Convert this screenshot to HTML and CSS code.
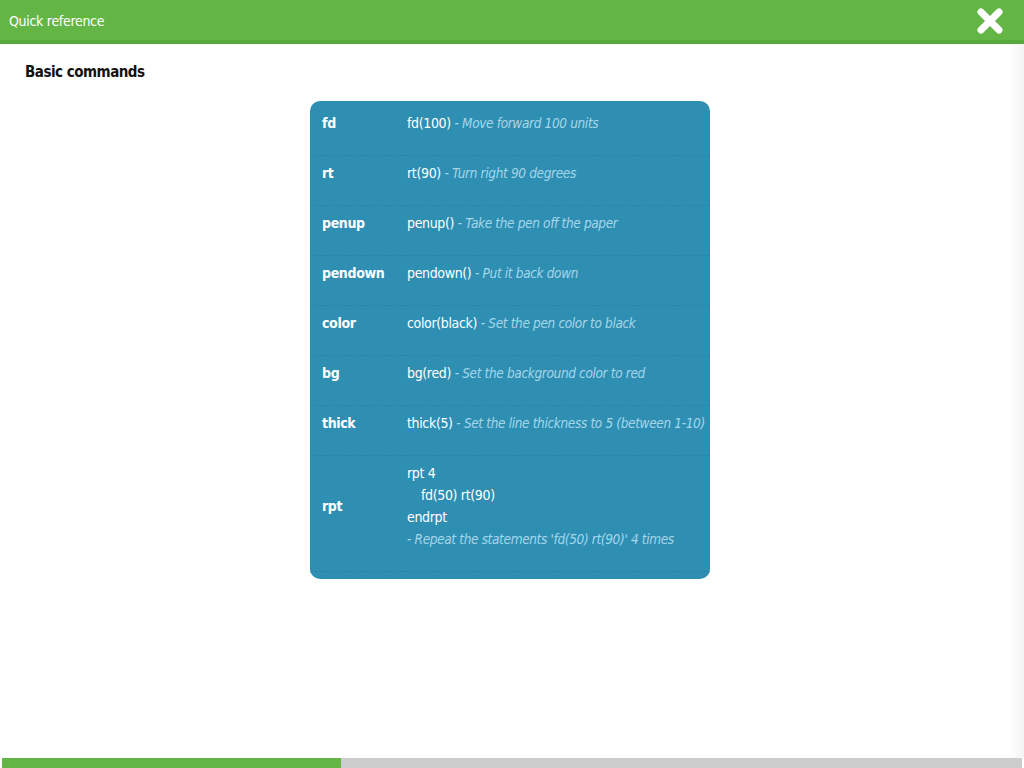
FILE: index.html
```html
<!DOCTYPE html>
<html>
<head>
<meta charset="utf-8">
<link rel="stylesheet" href="styles.css">
</head>
<body>
<div class="page">
  <header class="topbar">
    <span class="title">Quick reference</span>
    <svg class="close" width="28" height="28" viewBox="0 0 28 28"><path d="M5 5 L23 23 M23 5 L5 23" stroke="#fff" stroke-width="7" stroke-linecap="round" fill="none"/></svg>
  </header>
  <main class="content">
    <h1 class="heading">Basic commands</h1>
    <div class="card">
      <table class="ref">
        <colgroup><col class="col-cmd"><col></colgroup>
        <tr><td class="cmd">fd</td><td class="ex">fd(100) <span class="desc">- Move forward 100 units</span></td></tr>
        <tr><td class="cmd">rt</td><td class="ex">rt(90) <span class="desc">- Turn right 90 degrees</span></td></tr>
        <tr><td class="cmd">penup</td><td class="ex">penup() <span class="desc">- Take the pen off the paper</span></td></tr>
        <tr><td class="cmd">pendown</td><td class="ex">pendown() <span class="desc">- Put it back down</span></td></tr>
        <tr><td class="cmd">color</td><td class="ex">color(black) <span class="desc">- Set the pen color to black</span></td></tr>
        <tr><td class="cmd">bg</td><td class="ex">bg(red) <span class="desc">- Set the background color to red</span></td></tr>
        <tr><td class="cmd">thick</td><td class="ex">thick(5) <span class="desc">- Set the line thickness to 5 (between 1-10)</span></td></tr>
        <tr><td class="cmd">rpt</td><td class="ex">rpt 4<br><span class="indent">fd(50) rt(90)</span><br>endrpt<br><span class="desc">- Repeat the statements 'fd(50) rt(90)' 4 times</span></td></tr>
      </table>
    </div>
  </main>
  <footer class="progress"><div class="progress-fill"></div></footer>
</div>
</body>
</html>
```
FILE: styles.css
```css
html, body {
  margin: 0;
  padding: 0;
  height: 100%;
}
body {
  font-family: "DejaVu Sans Condensed", "DejaVu Sans", sans-serif;
  background: #fff;
  color: #111;
}
.page {
  height: 768px;
  display: flex;
  flex-direction: column;
}
.topbar {
  height: 40px;
  background: #63b545;
  border-bottom: 4px solid #58a83c;
  display: flex;
  align-items: center;
  justify-content: space-between;
  padding: 0 20px 0 9px;
  flex: none;
}
.title {
  color: #fff;
  font-size: 14px;
  letter-spacing: -0.3px;
  margin-top: 2px;
}
.close {
  display: block;
  margin-top: 2px;
}
.content {
  flex: 1;
  background: linear-gradient(to right, #fff calc(100% - 14px), #f3f3f3);
  padding: 18px 0 0 25px;
}
.heading {
  margin: 0;
  font-size: 15px;
  font-weight: bold;
  line-height: 20px;
  letter-spacing: -0.5px;
  color: #111;
}
.card {
  width: 400px;
  margin: 19px 0 0 285px;
  background: #2e8fb3;
  border-radius: 10px;
  padding: 5px 0 7px;
  overflow: hidden;
}
.ref {
  width: 100%;
  table-layout: fixed;
  border-collapse: collapse;
  font-size: 14px;
  line-height: 22px;
  letter-spacing: -0.35px;
  color: #fff;
  white-space: nowrap;
}
.col-cmd {
  width: 97px;
}
.ref td {
  padding: 6px 0 21px;
  border-bottom: 1px dashed #2a83a5;
  vertical-align: middle;
}
.ref .cmd {
  padding-left: 12px;
  font-weight: bold;
}
.desc {
  color: #a6d6ea;
  font-style: italic;
  font-size: 13.5px;
}
.indent {
  padding-left: 14px;
}
.progress {
  height: 10px;
  margin: 0 2px;
  background: #cccccc;
  flex: none;
}
.progress-fill {
  width: 339px;
  height: 100%;
  background: #63b545;
}
```
